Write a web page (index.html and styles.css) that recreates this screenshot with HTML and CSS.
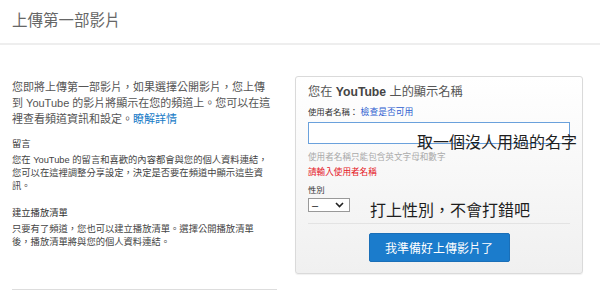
FILE: index.html
```html
<!DOCTYPE html>
<html lang="zh-Hant">
<head>
<meta charset="utf-8">
<title>上傳第一部影片</title>
<link rel="stylesheet" href="styles.css">
</head>
<body>
<header class="top">
  <h1 class="top-title">上傳第一部影片</h1>
</header>
<main class="content">
  <section class="info">
    <p class="lead">您即將上傳第一部影片，如果選擇公開影片，您上傳<br>到 YouTube 的影片將顯示在您的頻道上。您可以在這<br>裡查看頻道資訊和設定。<a class="link" href="#">瞭解詳情</a></p>
    <h2 class="info-head">留言</h2>
    <p class="info-text">您在 YouTube 的留言和喜歡的內容都會與您的個人資料連結，<br>您可以在這裡調整分享設定，決定是否要在頻道中顯示這些資<br>訊。</p>
    <h2 class="info-head info-head-2">建立播放清單</h2>
    <p class="info-text">只要有了頻道，您也可以建立播放清單。選擇公開播放清單<br>後，播放清單將與您的個人資料連結。</p>
    <div class="info-rule"></div>
  </section>
  <form class="card">
    <h3 class="card-title">您在 <b>YouTube</b> 上的顯示名稱</h3>
    <div class="field-label">使用者名稱： <a class="check" href="#">檢查是否可用</a></div>
    <input class="field" type="text">
    <div class="hint">使用者名稱只能包含英文字母和數字</div>
    <div class="error">請輸入使用者名稱</div>
    <div class="field-label gender-label">性別</div>
    <div class="select">
      <span class="select-value">–</span>
      <svg class="chev" width="9" height="6" viewBox="0 0 9 6"><path d="M1 1l3.5 3.5L8 1" fill="none" stroke="#222" stroke-width="1.6"/></svg>
    </div>
    <div class="card-sep"></div>
    <div class="actions"><button class="primary" type="button">我準備好上傳影片了</button></div>
    <span class="note note-name">取一個沒人用過的名字</span>
    <span class="note note-gender">打上性別，不會打錯吧</span>
  </form>
</main>
</body>
</html>
```
FILE: styles.css
```css
html, body {
  margin: 0;
  padding: 0;
  background: #fff;
}
body {
  width: 600px;
  height: 307px;
  overflow: hidden;
  font-family: "Liberation Sans", "Noto Sans CJK TC", sans-serif;
  color: #555;
}
.top {
  height: 43px;
  border-bottom: 2px solid #eeeeee;
  padding: 0 12px;
  box-sizing: content-box;
}
.top-title {
  margin: 0;
  padding-top: 11px;
  font-size: 15.5px;
  line-height: 20px;
  font-weight: normal;
  color: #666;
}
.content {
  display: flex;
  align-items: flex-start;
  padding-left: 12px;
  gap: 18px;
}
.info {
  width: 265px;
  padding-top: 34px;
}
.lead {
  margin: 0;
  font-size: 11px;
  line-height: 16px;
  color: #555;
  white-space: nowrap;
}
.link {
  color: #167ac6;
  text-decoration: none;
}
.info-head {
  margin: 11px 0 3px;
  font-size: 9.3px;
  line-height: 13px;
  font-weight: normal;
  color: #333;
}
.info-head-2 {
  margin-top: 14px;
}
.info-text {
  margin: 0;
  font-size: 9.3px;
  line-height: 13px;
  color: #444;
  white-space: nowrap;
}
.info-rule {
  margin-top: 40px;
  height: 1px;
  background: #dddddd;
}
.card {
  position: relative;
  width: 288px;
  box-sizing: border-box;
  margin: 31px 0 0;
  padding: 6px 12px 11px;
  border: 1px solid #dadada;
  border-radius: 3px;
  background: linear-gradient(#ffffff, #f0f0f0);
  box-shadow: 0 1px 1px rgba(0, 0, 0, 0.06);
}
.card-title {
  margin: 0;
  font-size: 12.2px;
  line-height: 19px;
  font-weight: normal;
  color: #555;
}
.card-title b {
  color: #444;
}
.field-label {
  margin-top: 4px;
  font-size: 8.4px;
  line-height: 12px;
  color: #333;
}
.check {
  color: #2f5fd0;
  text-decoration: none;
  font-size: 8.8px;
}
.field {
  display: block;
  box-sizing: border-box;
  width: 262px;
  height: 22px;
  margin: 4px 0 0;
  border: 1px solid #6aa1dc;
  background: #fff;
  outline: none;
}
.hint {
  margin-top: 7px;
  font-size: 8.6px;
  line-height: 12px;
  color: #aaa;
}
.error {
  margin-top: 3px;
  font-size: 8.6px;
  line-height: 12px;
  color: #e5161f;
}
.gender-label {
  margin-top: 6px;
}
.select {
  display: flex;
  align-items: center;
  justify-content: space-between;
  box-sizing: border-box;
  width: 42px;
  height: 14px;
  margin-top: 2px;
  padding: 0 5px 0 3px;
  border: 1px solid #999;
  background: #fff;
  font-size: 11px;
  line-height: 12px;
  color: #222;
}
.chev {
  display: block;
}
.card-sep {
  margin-top: 11px;
  height: 1px;
  background: #e3e3e3;
}
.actions {
  display: flex;
  justify-content: center;
  margin-top: 9px;
}
.primary {
  width: 141px;
  height: 29px;
  box-sizing: border-box;
  border: 1px solid #1a6fb8;
  border-radius: 2px;
  background: #1b7ccc;
  color: #fff;
  font-family: "Liberation Sans", "Noto Sans CJK TC", sans-serif;
  font-size: 12px;
  padding: 0;
}
.note {
  position: absolute;
  font-size: 16px;
  line-height: 16px;
  color: #1e1e1e;
  white-space: nowrap;
}
.note-name {
  left: 121px;
  top: 58px;
}
.note-gender {
  left: 74px;
  top: 126px;
}
```
